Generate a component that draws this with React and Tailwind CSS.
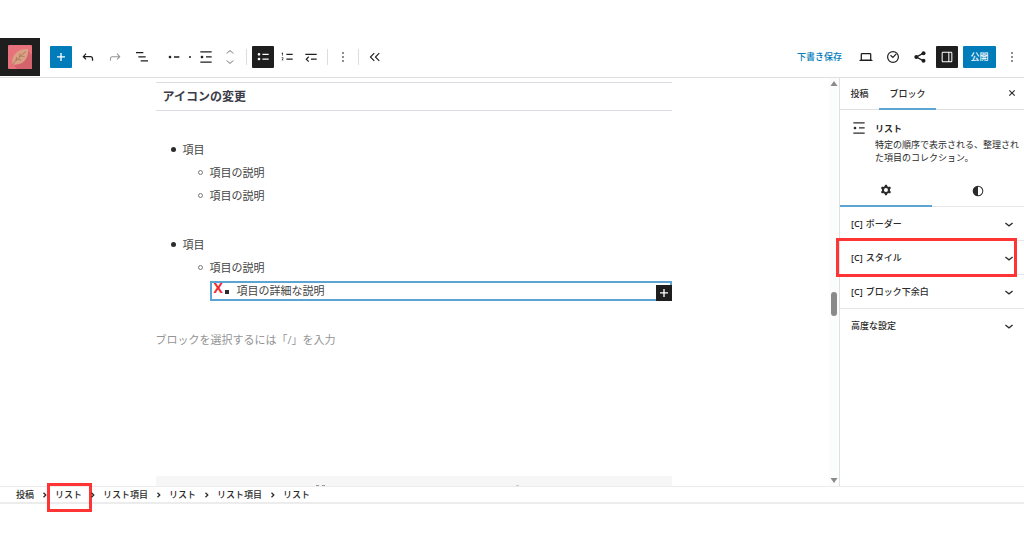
import { useState } from "react";
import clsx from "clsx";

const paths = {
    plus: "M11 12.8V18H13V12.8H18V11H13V6H11V11H6V12.8H11Z",
    undo: "M18.3 11.4c-.6-.6-1.4-1-2.3-1H7l2.7-2.9L8.400 6.300 3.700 11.500 8.400 16.300l1.300-1.200L7.200 12.400H16c.5 0 .7.1 1 .4.900.9.9 3.200.9 4.300v.5h1.900v-.4c0-1.500 0-4.400-1.500-5.800z",
    redo: "M15.6 6.5l-1.1 1 2.9 3.3H8c-.9 0-1.7.3-2.3.9-1.4 1.5-1.4 4.2-1.4 5.6v.2h1.5v-.3c0-1.1 0-3.5 1-4.5.3-.3.7-.5 1.3-.5h9.2L14.5 15l1.1 1.1 4.6-4.6-4.6-5z",
    outline: "M3 4.500h11v1.900H3V4.500Zm3.500 6.500h11v1.900h-11V11ZM21 17H10v1.900h11V17Z",
    listItem: "M12 11v2h8v-2h-8zm-6-1c-1.1 0-2 .9-2 2s.9 2 2 2 2-.9 2-2-.9-2-2-2z",
    list: "M3.5 3.5v1.8h17V3.5h-17zm8.500 9.300h8.500V11H12v1.800zM3.500 20.500h17v-1.800h-17v1.800zM8 12c0-1.100-.9-2-2-2s-2 .9-2 2 .9 2 2 2 2-.9 2-2z",
    bullets: "M11.1 16h9.400v-1.800h-9.400V16zm0-8.800V9h9.400V7.200h-9.400zM6 13c-1.100 0-2 .9-2 2s.9 2 2 2 2-.9 2-2-.9-2-2-2zm0-7c-1.100 0-2 .9-2 2s.9 2 2 2 2-.9 2-2-.9-2-2-2z",
    numbers: "M11.1 16H20.500v-1.800h-9.400V16zm0-8.800V9h9.400V7.200h-9.400zM5 6.700V10h1V5.300L3.800 6l.4 1 .8-.3zm-.4 5.700c-.3.1-.5.2-.7.3l.1 1.100c.2-.2.5-.4.8-.5.3-.1.6 0 .7.1.2.3 0 .8-.2 1.100-.5.8-.9 1.600-1.400 2.500h2.700v-1h-1c.3-.6.8-1.400.9-2.100.1-.3 0-.8-.2-1.100-.5-.6-1.300-.5-1.700-.4z",
    outdent: "M3.500 7v1.900h17V7h-17zm8.500 9h8.500v-1.900H12V16zm-4-5l-4.300 4.200L8 19.400l1.200-1.200-3-3 3-3z",
    more: "M13 19h-2v-2h2v2zm0-6h-2v-2h2v2zm0-6h-2V5h2v2z",
    movers: "M5.500 5.400L12 0l6.500 5.400-.9 1.200L12 2 6.400 6.600zM5.500 18.600L12 24l6.500-5.400-.9-1.200L12 22l-5.600-4.600z",
    collapse: "M11.500 6.800L10.300 5.600 4 12l6.300 6.400 1.200-1.200L6.400 12zM19 6.800l-1.200-1.200L11.500 12l6.300 6.400 1.200-1.200L13.900 12z",
    laptop: "M20.500 16h-.5V8c0-1.100-.9-2-2-2H6c-1.100 0-2 .9-2 2v8h-.5c-.8 0-1.500.9-1.500 1.900h20c0-1-.7-1.900-1.500-1.900zM5.900 8.300c0-.3.2-.5.5-.5h11.200c.3 0 .5.2.5.5v7.600H5.900V8.300z",
    sidebar: "M18 4H6c-1.100 0-2 .9-2 2v12c0 1.100.9 2 2 2h12c1.100 0 2-.9 2-2V6c0-1.100-.9-2-2-2zm-4 14.500H6c-.3 0-.5-.2-.5-.5V6c0-.3.2-.5.5-.5h8v13zm4.500-.5c0 .3-.2.5-.5.5h-2.500v-13H18c.3 0 .5.2.5.5v12z",
    close: "M12 13.400l3.900 3.900 1.400-1.400L13.400 12l3.900-3.900-1.400-1.400L12 10.600 8.100 6.700 6.700 8.100l3.900 3.900-3.900 3.900 1.400 1.400z",
    cog: "M10.289 4.836A1 1 0 0111.275 4h1.306a1 1 0 01.987.836l.244 1.466c.787.26 1.503.679 2.108 1.218l1.393-.522a1 1 0 011.216.437l.653 1.130a1 1 0 01-.23 1.273l-1.148.944a6.025 6.025 0 010 2.435l1.149.946a1 1 0 01.23 1.272l-.653 1.130a1 1 0 01-1.216.437l-1.394-.522c-.605.54-1.320.958-2.108 1.218l-.244 1.466a1 1 0 01-.987.836h-1.306a1 1 0 01-.986-.836l-.244-1.466a5.995 5.995 0 01-2.108-1.218l-1.394.522a1 1 0 01-1.217-.436l-.653-1.131a1 1 0 01.23-1.272l1.149-.946a6.026 6.026 0 010-2.435l-1.148-.944a1 1 0 01-.23-1.272l.653-1.131a1 1 0 011.217-.437l1.393.522a5.994 5.994 0 012.108-1.218l.244-1.466zM14.929 12a3 3 0 11-6 0 3 3 0 016 0z",
    styles: "M20 12a8 8 0 1 1-16 0 8 8 0 0 1 16 0Zm-1.500 0a6.500 6.500 0 0 1-6.500 6.500v-13a6.500 6.500 0 0 1 6.500 6.500Z",
    down: "M18 11.200L12 16l-6-4.800 1.200-1.500L12 13.500l4.800-3.800z",
};

const Icon = ({ name, className = "size-4" }) => (
    <svg viewBox="0 0 24 24" className={clsx("flex-none overflow-visible", className)} fill="currentColor" fillRule="evenodd" aria-hidden="true">
        <path d={paths[name]} />
    </svg>
);

const ToolButton = ({ icon, label, className, children }) => (
    <button aria-label={label} title={label} className={clsx("flex h-[22px] flex-none items-center justify-center rounded-[1px]", className || "w-[22px]")}>
        {children || <Icon name={icon} />}
    </button>
);

const Divider = () => <span className="mx-[5px] h-4 w-px bg-[#dddddd]" />;

const Logo = () => (
    <a href="#" aria-label="投稿一覧を表示" className="flex w-10 flex-none items-center justify-center self-stretch bg-[#1e1e1e]">
        <svg viewBox="0 0 24 24" className="size-6" aria-hidden="true">
            <rect width="24" height="24" rx="1" fill="#e8727c" />
            <path d="M6 20L20 6l4 4v14H9z" fill="#d4636e" />
            <path d="M4.5 19.5C3 11 9 3.500 20 4c1 9-5 17-15.500 15.500z" fill="#dba183" />
            <path d="M4 20.500C8 15 13 10 18 6.500M8 16l.5-4M11.500 12.500l.5-4M9.500 14.500l4 .5M13 11l3.500.5" stroke="#9a6a55" strokeWidth=".7" fill="none" />
        </svg>
    </a>
);

const Header = () => (
    <header className="flex h-10 flex-none items-center border-b border-[#e0e0e0] pb-px">
        <Logo />
        <div className="ml-[10px] flex items-center gap-[5px]">
            <ToolButton icon="plus" label="ブロックを追加" className="w-[22px] bg-[#007cba] text-white" />
            <ToolButton icon="undo" label="元に戻す" />
            <ToolButton icon="redo" label="やり直す" className="w-[22px] text-[#949494]" />
            <ToolButton icon="outline" label="ドキュメント概観" />
        </div>
        <div className="ml-[10px] flex items-center">
            <ToolButton icon="listItem" label="リスト項目を選択" />
            <span className="mx-1 size-[2px] bg-[#555555]" />
            <ToolButton icon="list" label="リスト" />
            <ToolButton label="移動" className="ml-[2px] w-[22px] text-[#8a8a8a]">
                <Icon name="movers" className="size-[14px]" />
            </ToolButton>
            <Divider />
            <div className="flex items-center gap-[2px]">
                <ToolButton icon="bullets" label="順序なしリスト" className="w-[22px] bg-[#1e1e1e] text-white" />
                <ToolButton icon="numbers" label="順序付きリスト" />
                <ToolButton icon="outdent" label="インデント解除" />
            </div>
            <Divider />
            <ToolButton icon="more" label="オプション" className="w-5" />
            <Divider />
            <ToolButton icon="collapse" label="ブロックツールを隠す" />
        </div>
        <div className="ml-auto flex items-center gap-[5px] pr-px">
            <button className="mr-2 text-[9px] font-medium text-[#007cba]">下書き保存</button>
            <ToolButton icon="laptop" label="表示" />
            <ToolButton label="パフォーマンス">
                <svg viewBox="0 0 14 14" className="size-[14px]" fill="none" stroke="currentColor" strokeWidth="1.2" aria-hidden="true">
                    <circle cx="7" cy="7" r="5.4" />
                    <path d="M4.500 5.200l2.400 2.200 3.400-3.600" />
                </svg>
            </ToolButton>
            <ToolButton label="共有">
                <svg viewBox="0 0 14 14" className="size-[14px]" fill="currentColor" aria-hidden="true">
                    <path d="M10.500 3.200L3.500 7l7 3.800" fill="none" stroke="currentColor" strokeWidth="1.4" />
                    <circle cx="10.500" cy="3.200" r="2" />
                    <circle cx="3.300" cy="7" r="2" />
                    <circle cx="10.500" cy="10.800" r="2" />
                </svg>
            </ToolButton>
            <ToolButton icon="sidebar" label="設定" className="w-[22px] bg-[#1e1e1e] text-white" />
            <button className="h-[22px] w-[33px] rounded-[1px] bg-[#007cba] text-[9px] font-medium text-white">公開</button>
            <ToolButton icon="more" label="オプション" />
        </div>
    </header>
);

const Disc = () => <span className="absolute top-[9px] -left-3 size-[5px] rounded-full bg-[#2b2b2b]" />;
const Circle = () => <span className="absolute top-[9px] -left-3 size-[5px] rounded-full border border-[#777777]" />;

const Canvas = () => (
    <main className="flex min-w-0 flex-1 flex-col overflow-hidden pr-[18px] pl-4 text-[11px] leading-[23px] text-[#444444]">
        <div className="mx-auto flex w-full max-w-[516px] flex-1 flex-col">
            <h2 className="mt-1 border-y border-[#dcdce2] pl-[7px] text-[12px] leading-[27px] font-bold text-[#3c3c48]">アイコンの変更</h2>
            <ul className="mt-[27px] pl-[27px]">
                <li className="relative"><Disc />項目
                    <ul className="pl-[27px]">
                        <li className="relative"><Circle />項目の説明</li>
                        <li className="relative"><Circle />項目の説明</li>
                    </ul>
                </li>
            </ul>
            <ul className="mt-[26px] pl-[27px]">
                <li className="relative"><Disc />項目
                    <ul className="pl-[27px]">
                        <li className="relative"><Circle />項目の説明
                            <ul className="relative mt-[2px] border-2 border-[#5ba4d3] pl-[25px] leading-4">
                                <li className="relative">
                                    <span className="absolute top-[7px] -left-3 size-1 bg-[#2b2b2b]" />
                                    項目の詳細な説明
                                </li>
                                <li className="absolute -top-[3px] left-[2px] list-none text-[14px] font-bold text-[#f22b2b]">X</li>
                                <li className="absolute -right-[2px] -bottom-[2px] list-none">
                                    <button aria-label="ブロックを追加" className="flex size-4 items-center justify-center bg-[#1e1e1e] text-white">
                                        <Icon name="plus" />
                                    </button>
                                </li>
                            </ul>
                        </li>
                    </ul>
                </li>
            </ul>
            <input
                aria-label="空のブロック"
                placeholder="ブロックを選択するには「/」を入力"
                className="mt-[27px] h-[23px] w-full outline-none placeholder:text-[#949494]"
            />
            {/* the meta box area starts just below the fold */}
            <div className="mt-auto flex h-[10px] flex-none items-end bg-[#f6f6f6]">
                <span className="ml-[160px] h-px w-[3px] bg-[#999999]" />
                <span className="ml-[3px] h-px w-[3px] bg-[#999999]" />
                <span className="ml-[191px] h-px w-[3px] bg-[#cccccc]" />
            </div>
        </div>
    </main>
);

const Scrollbar = () => (
    <div className="flex w-[10px] flex-none flex-col items-center bg-[#fbfcfc] py-[3px] text-[#8a8a8a]">
        <svg viewBox="0 0 8 5" className="h-[5px] w-2" fill="currentColor" aria-hidden="true"><path d="M4 0l3.500 5h-7z" /></svg>
        <div className="flex-[208]" />
        <div className="h-6 w-[6px] rounded-full bg-current" />
        <div className="flex-[163]" />
        <svg viewBox="0 0 8 5" className="h-[5px] w-2" fill="currentColor" aria-hidden="true"><path d="M4 5l3.500-5h-7z" /></svg>
    </div>
);

const panels = [
    { prefix: "[C]", title: "ボーダー" },
    { prefix: "[C]", title: "スタイル", marked: true },
    { prefix: "[C]", title: "ブロック下余白" },
    { title: "高度な設定" },
];

const Sidebar = () => {

    const [open, setOpen] = useState(null);

    return (
        <aside className="w-[185px] flex-none border-l border-[#e0e0e0] text-[9px] text-[#2b2b2b]">
            <div className="flex h-8 items-stretch border-b border-[#e0e0e0]">
                <button className="w-[39px] font-medium">投稿</button>
                <button className="-mb-px w-[57px] border-b-2 border-[#5ba4d3] pt-px font-medium">ブロック</button>
                <ToolButton label="設定を閉じる" className="mt-1 ml-auto w-6">
                    <Icon name="close" className="size-[14px]" />
                </ToolButton>
            </div>

            <div className="flex gap-2 pt-[10px] pl-[11px]">
                <Icon name="list" />
                <div className="leading-[13px]">
                    <h2 className="mt-[2px] font-bold">リスト</h2>
                    <p className="mt-[3px]">特定の順序で表示される、整理された項目のコレクション。</p>
                </div>
            </div>

            <div className="mt-[11px] flex h-8 border-b border-[#e6e6e6]">
                <button aria-label="設定" className="-mb-px flex flex-1 items-center justify-center border-b-2 border-[#5ba4d3]">
                    <Icon name="cog" />
                </button>
                <button aria-label="スタイル" className="flex flex-1 items-center justify-center">
                    <Icon name="styles" />
                </button>
            </div>

            {panels.map(({ prefix, title, marked }, i) => (
                <div key={title} className="relative border-b border-[#e6e6e6] last:border-b-0">
                    <button
                        className="flex h-[33px] w-full items-center gap-[3px] pr-[7px] pl-[11px] font-medium"
                        aria-expanded={open === i}
                        onClick={() => setOpen(open === i ? null : i)}
                    >
                        {prefix && <span className="font-semibold">{prefix}</span>}
                        <span className="mr-auto">{title}</span>
                        <Icon name="down" />
                    </button>
                    {marked && <span className="pointer-events-none absolute -inset-y-[3px] right-[7px] -left-1 border-3 border-[#ff3535]" />}
                </div>
            ))}
        </aside>
    );
};

const crumbs = ["投稿", "リスト", "リスト項目", "リスト", "リスト項目", "リスト"];

const Breadcrumb = () => (
    <nav aria-label="ブロックのパンくずリスト" className="flex-none border-t border-b-2 border-[#ececec] text-[9px] leading-[14px] font-medium text-[#2b2b2b]">
        <ol className="flex pt-px pl-4">
            {crumbs.map((crumb, i) => (
                <li key={i} className="relative flex items-center">
                    {i > 0 && (
                        <svg viewBox="0 0 5 6" className="mx-2 h-[6px] w-[5px]" fill="none" stroke="currentColor" strokeWidth="1.3" aria-hidden="true">
                            <path d="M1.500 .7L3.800 3 1.500 5.300" />
                        </svg>
                    )}
                    <button>{crumb}</button>
                    {i === 1 && <span className="pointer-events-none absolute -top-[5px] -right-[10px] -bottom-[10px] left-[13px] border-3 border-[#ff3535]" />}
                </li>
            ))}
        </ol>
    </nav>
);

const App = () => {
    return (
        <div className="flex h-screen flex-col bg-white pt-[38px] pb-8 font-['Open_Sans','Noto_Sans_CJK_JP',sans-serif] text-[#1e1e1e]">
            <Header />
            <div className="flex min-h-0 flex-1">
                <Canvas />
                <Scrollbar />
                <Sidebar />
            </div>
            <Breadcrumb />
        </div>
    )
}
export default App;
